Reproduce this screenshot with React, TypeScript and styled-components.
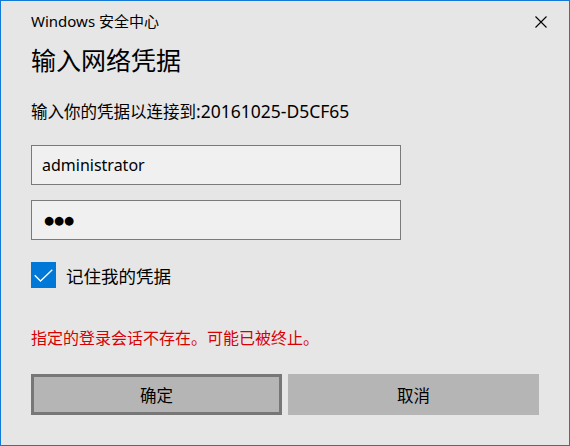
import React from "react";
import styled, { createGlobalStyle } from "styled-components";

const Global = createGlobalStyle`
  html, body { margin: 0; padding: 0; background: #e6e6e6; }
  * { box-sizing: border-box; }
`;

const FONT = `"Noto Sans", "Noto Sans CJK SC", sans-serif`;

const Window = styled.div`
  width: 570px;
  height: 446px;
  border: 1px solid #1379d6;
  background: #e6e6e6;
  font-family: ${FONT};
  color: #000;
  display: flex;
  flex-direction: column;
`;

const TitleBar = styled.div`
  height: 40px;
  display: flex;
  align-items: center;
  justify-content: space-between;
  padding-left: 30px;
`;

const TitleText = styled.div`
  font-size: 15px;
  line-height: 20px;
  margin-top: -1px;
`;

const CloseButton = styled.button`
  width: 56px;
  height: 40px;
  border: none;
  background: transparent;
  display: flex;
  align-items: center;
  justify-content: center;
  padding: 0;
  margin-top: 1px;
`;

const Content = styled.div`
  padding: 0 30px;
  display: flex;
  flex-direction: column;
`;

const Heading = styled.h1`
  margin: 2px 0 0;
  font-weight: 400;
  font-size: 25px;
  line-height: 34px;
`;

const Message = styled.div`
  margin-top: 23px;
  font-size: 16.5px;
  line-height: 22px;
`;

const Latin = styled.span`
  font-size: 17.5px;
`;

const Field = styled.div<{ $gap: number }>`
  width: 370px;
  height: 40px;
  border: 1px solid #7a7a7a;
  background: #f0f0f0;
  display: flex;
  align-items: center;
  padding-left: 10px;
  font-size: 16px;
  margin-top: ${(p) => p.$gap}px;
`;

const Dots = styled.span`
  font-family: "DejaVu Sans", sans-serif;
  font-size: 11.5px;
  padding-left: 2px;
`;

const CheckRow = styled.label`
  margin-top: 22px;
  display: flex;
  align-items: center;
  gap: 10px;
  font-size: 17.5px;
`;

const Box = styled.span`
  width: 25px;
  height: 26px;
  background: #0078d7;
  display: flex;
  align-items: center;
  justify-content: center;
`;

const ErrorText = styled.div`
  margin-top: 38px;
  color: #d80000;
  font-size: 16px;
  line-height: 24px;
`;

const Buttons = styled.div`
  margin-top: 24px;
  display: grid;
  grid-template-columns: 1fr 1fr;
  gap: 6px;
`;

const Button = styled.button<{ $focused?: boolean }>`
  height: 41px;
  background: #b5b5b5;
  border: 3px solid ${(p) => (p.$focused ? "#777777" : "#b5b5b5")};
  font-family: ${FONT};
  font-size: 16.5px;
  color: #000;
  padding: 0;
`;

export default function App() {
  return (
    <>
      <Global />
      <Window>
        <TitleBar>
          <TitleText>Windows 安全中心</TitleText>
          <CloseButton aria-label="关闭">
            <svg width="12" height="12" viewBox="0 0 12 12">
              <path d="M0.5 0.5 L11.5 11.5 M11.5 0.5 L0.5 11.5" stroke="#000" strokeWidth="1.1" fill="none" />
            </svg>
          </CloseButton>
        </TitleBar>
        <Content>
          <Heading>输入网络凭据</Heading>
          <Message>
            输入你的凭据以连接到<Latin>:20161025-D5CF65</Latin>
          </Message>
          <Field $gap={22}>administrator</Field>
          <Field $gap={15}>
            <Dots>●●●</Dots>
          </Field>
          <CheckRow>
            <Box>
              <svg width="19" height="13" viewBox="0 0 19 13">
                <path d="M0.7 6.2 L6.5 12 L18.3 0.7" stroke="#fff" strokeWidth="1.3" fill="none" />
              </svg>
            </Box>
            记住我的凭据
          </CheckRow>
          <ErrorText>指定的登录会话不存在。可能已被终止。</ErrorText>
          <Buttons>
            <Button $focused>确定</Button>
            <Button>取消</Button>
          </Buttons>
        </Content>
      </Window>
    </>
  );
}
